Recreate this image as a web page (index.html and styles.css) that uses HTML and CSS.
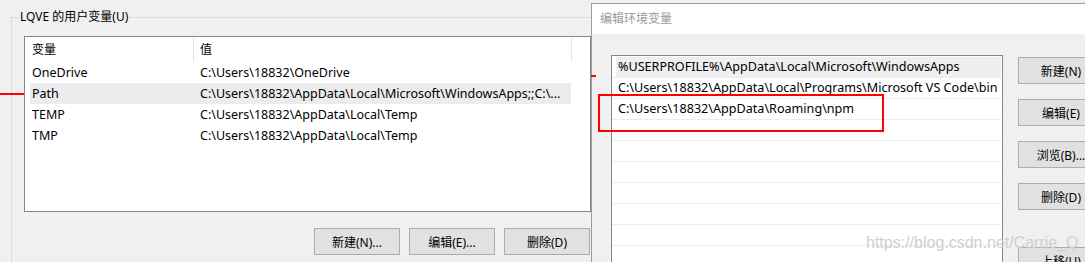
FILE: index.html
```html
<!DOCTYPE html>
<html lang="zh-CN">
<head>
<meta charset="utf-8">
<title>环境变量</title>
<link rel="stylesheet" href="styles.css">
</head>
<body>
<div class="desktop">
  <section class="env-window">
    <fieldset class="group">
      <legend>LQVE 的用户变量(U)</legend>
      <div class="listview">
        <div class="lv-header">
          <div class="col col-name">变量</div>
          <div class="col col-value">值</div>
        </div>
        <div class="lv-row"><span class="c-name">OneDrive</span><span class="c-value">C:\Users\18832\OneDrive</span></div>
        <div class="lv-row is-selected"><span class="c-name">Path</span><span class="c-value">C:\Users\18832\AppData\Local\Microsoft\WindowsApps;;C:\...</span></div>
        <div class="lv-row"><span class="c-name">TEMP</span><span class="c-value">C:\Users\18832\AppData\Local\Temp</span></div>
        <div class="lv-row"><span class="c-name">TMP</span><span class="c-value">C:\Users\18832\AppData\Local\Temp</span></div>
      </div>
      <div class="btn-row">
        <button class="btn">新建(N)...</button>
        <button class="btn">编辑(E)...</button>
        <button class="btn">删除(D)</button>
      </div>
    </fieldset>
  </section>

  <section class="edit-dialog">
    <div class="titlebar">编辑环境变量</div>
    <div class="dlg-body">
      <div class="path-list">
        <div class="path-row is-selected"><span class="path-text">%USERPROFILE%\AppData\Local\Microsoft\WindowsApps</span></div>
        <div class="path-row"><span class="path-text">C:\Users\18832\AppData\Local\Programs\Microsoft VS Code\bin</span></div>
        <div class="path-row"><span class="path-text">C:\Users\18832\AppData\Roaming\npm</span></div>
        <div class="path-row"><span class="path-text"></span></div>
        <div class="path-row"><span class="path-text"></span></div>
        <div class="path-row"><span class="path-text"></span></div>
        <div class="path-row"><span class="path-text"></span></div>
        <div class="path-row"><span class="path-text"></span></div>
        <div class="path-row"><span class="path-text"></span></div>
        <div class="path-row"><span class="path-text"></span></div>
      </div>
      <div class="side-buttons">
        <button class="btn">新建(N)</button>
        <button class="btn">编辑(E)</button>
        <button class="btn">浏览(B)...</button>
        <button class="btn">删除(D)</button>
        <button class="btn btn-spaced">上移(U)</button>
      </div>
    </div>
  </section>

  <div class="mark-line"></div>
  <div class="mark-tick"></div>
  <div class="mark-box"></div>
  <div class="watermark">https://blog.csdn.net/Carrie_Q</div>
</div>
</body>
</html>
```

FILE: styles.css
```css
html, body {
  margin: 0;
  padding: 0;
}

body {
  width: 1085px;
  height: 262px;
  overflow: hidden;
  background: #f0f0f0;
  font-family: "Noto Sans", "Noto Sans CJK SC", sans-serif;
  font-size: 12px;
  color: #000;
}

.desktop {
  position: relative;
  width: 1085px;
  height: 262px;
  overflow: hidden;
}

/* ---------- left window ---------- */
.env-window {
  width: 591px;
  height: 262px;
  overflow: hidden;
}

.group {
  margin: 10px -40px 0 11px;
  padding: 12px 0 0 12px;
  border: 1px solid #dcdcdc;
  border-right: none;
  border-bottom: none;
  min-height: 260px;
  min-width: 0;
}

.group legend {
  margin-left: -5px;
  padding: 0 1px;
  line-height: 14px;
}

.listview {
  width: 567px;
  height: 176px;
  box-sizing: border-box;
  border: 1px solid #828790;
  background: #fff;
}

.lv-header {
  display: flex;
  height: 25px;
}

.lv-header .col {
  box-sizing: border-box;
  line-height: 25px;
  border-right: 1px solid #e5e5e5;
}

.col-name {
  width: 169px;
  padding-left: 7px;
}

.col-value {
  width: 378px;
  padding-left: 6px;
}

.lv-row {
  display: flex;
  box-sizing: border-box;
  width: 541px;
  height: 21px;
  margin-left: 5px;
  padding-left: 2px;
  font-size: 12.5px;
  line-height: 21px;
  white-space: nowrap;
}

.lv-row .c-name {
  width: 168px;
  flex: none;
}

.lv-row .c-value {
  flex: 1;
  overflow: hidden;
}

.lv-row.is-selected {
  background: #ececec;
}

.btn-row {
  display: flex;
  justify-content: flex-end;
  gap: 9px;
  width: 566px;
  margin-top: 16px;
}

.btn {
  width: 86px;
  height: 27px;
  box-sizing: border-box;
  padding: 0;
  border: 1px solid #adadad;
  background: #e1e1e1;
  font: inherit;
  color: #000;
  white-space: nowrap;
  flex: none;
}

/* ---------- edit dialog ---------- */
.edit-dialog {
  position: absolute;
  left: 591px;
  top: 3px;
  width: 520px;
  height: 290px;
  border-left: 1px solid #9b9b9b;
  border-top: 1px solid #9b9b9b;
  background: #f0f0f0;
}

.titlebar {
  height: 30px;
  line-height: 30px;
  padding-left: 8px;
  background: #fff;
  color: #9a9a9a;
}

.dlg-body {
  display: flex;
  gap: 15px;
  padding: 21px 0 0 19px;
}

.path-list {
  flex: none;
  width: 392px;
  height: 240px;
  box-sizing: border-box;
  padding: 1px 1px 0 0;
  border: 1px solid #828790;
  background: #fff;
}

.path-row {
  display: flex;
  box-sizing: border-box;
  height: 21px;
  padding-left: 4px;
  border-bottom: 1px solid #ececec;
  font-size: 12.6px;
  line-height: 20px;
}

.path-text {
  flex: 1;
  padding-left: 2px;
  white-space: nowrap;
  overflow: hidden;
}

.path-row.is-selected .path-text {
  background: #efefef;
}

.side-buttons {
  display: flex;
  flex-direction: column;
  gap: 15px;
  margin-top: 2px;
}

.side-buttons .btn-spaced {
  margin-top: 22px;
}

/* ---------- annotations ---------- */
.mark-line {
  position: absolute;
  left: 0;
  top: 93px;
  width: 24px;
  height: 2px;
  background: #ff0000;
}

.mark-tick {
  position: absolute;
  left: 591px;
  top: 75px;
  width: 5px;
  height: 2px;
  background: #ff0000;
}

.mark-box {
  position: absolute;
  left: 598px;
  top: 94px;
  width: 286px;
  height: 38px;
  box-sizing: border-box;
  border: 2px solid #ff0000;
}

.watermark {
  position: absolute;
  left: 866px;
  top: 234px;
  font-family: "Liberation Sans", sans-serif;
  font-size: 16px;
  line-height: 18px;
  color: #cfcfcf;
  white-space: nowrap;
}
```
